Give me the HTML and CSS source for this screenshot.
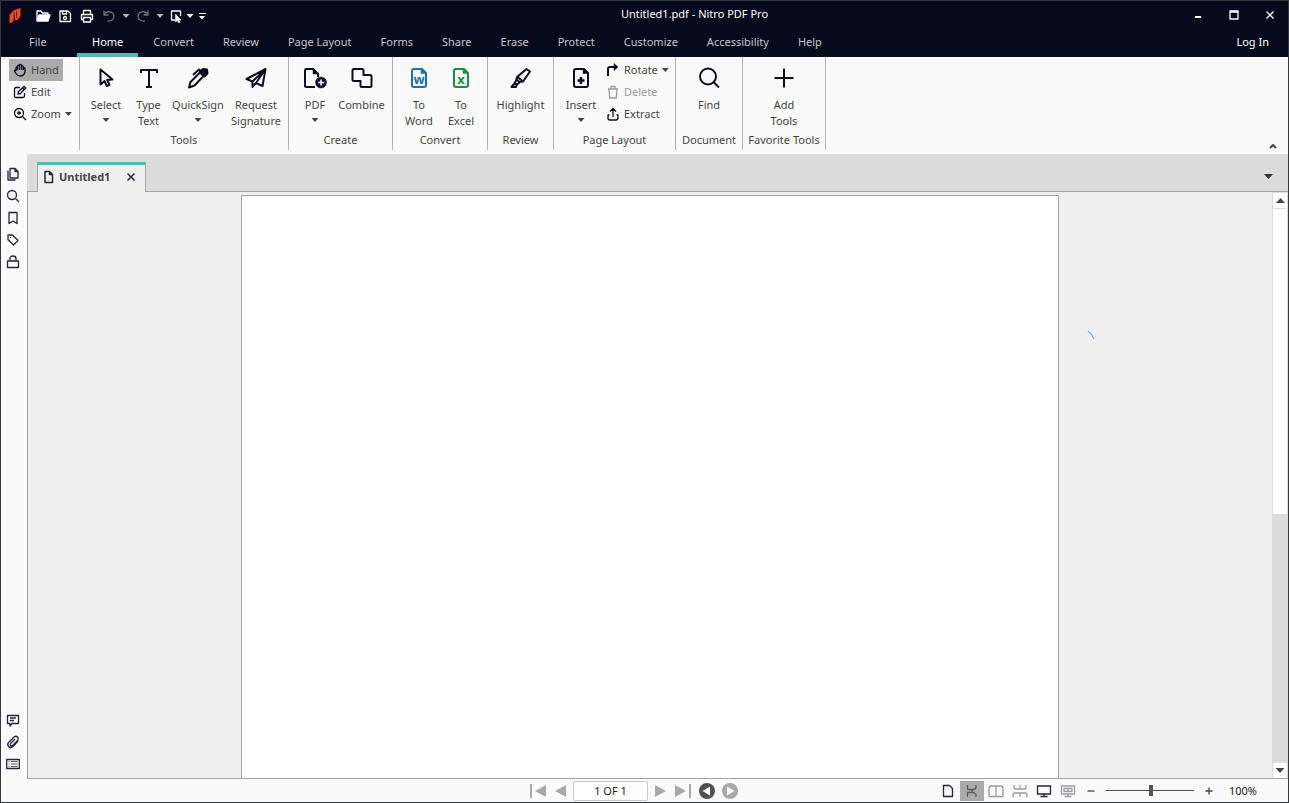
FILE: index.html
```html
<!DOCTYPE html>
<html lang="en">
<head>
    <meta charset="UTF-8">
    <meta name="viewport" content="width=device-width, initial-scale=1.0">
    <title>Untitled1.pdf - Nitro PDF Pro</title>
    <link rel="stylesheet" href="styles.css">
</head>
<body>
    <header class="titlebar">
        <div class="title-row">
            <div class="quick-access">
                <svg class="logo" width="14" height="18" viewBox="0 0 14 18"><path d="M1.500 8 4.500 4.500 6 4v7l-1 4-3.500 1z"/><path d="M5.500 3.500 11 1.500 12.500 1v8L10 12.500l-3 1z"/><path class="logo-cut" d="M6 5v7M8.500 4v7"/></svg>
                <button class="qa" aria-label="Open"><svg width="16" height="16" viewBox="0 0 16 16"><path d="M2 13V3h4l1.500 2H13v2"/><path class="solid" d="M4 7h11L13 13H2z"/></svg></button>
                <button class="qa" aria-label="Save"><svg width="16" height="16" viewBox="0 0 16 16"><path d="M3 3h8l2.500 2.500V13.500H3z"/><path d="M5.500 3v3h4V3"/><circle cx="8" cy="10" r="1.500"/></svg></button>
                <button class="qa" aria-label="Print"><svg width="16" height="16" viewBox="0 0 16 16"><path d="M4.500 6V2.500h7V6M4.500 11.500H2.500V6.500h11v5h-2"/><path d="M4.500 9.500h7v4.500h-7z"/></svg></button>
                <button class="qa dim" aria-label="Undo"><svg width="16" height="16" viewBox="0 0 16 16"><path d="M3 2.500V7h4.500M3 7c2-5 10-4 10 1.500 0 3-3 5-6.500 4.500"/></svg></button>
                <button class="drop dim" aria-label="Undo list"><i class="caret"></i></button>
                <button class="qa dim" aria-label="Redo"><svg width="16" height="16" viewBox="0 0 16 16"><path d="M13 2.500V7H8.500M13 7C11 2 3 3 3 8.500c0 3 3 5 7 4.500"/></svg></button>
                <button class="drop dim" aria-label="Redo list"><i class="caret"></i></button>
                <button class="qa narrow" aria-label="Select tool"><svg width="16" height="16" viewBox="0 0 16 16"><path d="M7 12H3.500V3h9v5"/><path class="solid thin" d="M7.500 6v8l2-1.500 1 2.500 1.500-.7-1-2.300H13z"/></svg></button>
                <button class="drop" aria-label="Select list"><i class="caret"></i></button>
                <button class="drop" aria-label="Customize toolbar"><i class="dash"></i><i class="caret"></i></button>
            </div>
            <div class="window-title">Untitled1.pdf - Nitro PDF Pro</div>
            <div class="window-controls">
                <button aria-label="Minimize"><svg width="12" height="12" viewBox="0 0 12 12"><path class="heavy" d="M3 8h6"/></svg></button>
                <button aria-label="Maximize"><svg width="12" height="12" viewBox="0 0 12 12"><path d="M2 2h8v8H2zM2 3h8"/></svg></button>
                <button aria-label="Close"><svg width="12" height="12" viewBox="0 0 12 12"><path d="M2.500 2.500l7 7M9.500 2.500l-7 7"/></svg></button>
            </div>
        </div>
        <nav class="menu">
            <a class="file" href="#">File</a>
            <a class="active" href="#">Home</a>
            <a href="#">Convert</a>
            <a href="#">Review</a>
            <a href="#">Page Layout</a>
            <a href="#">Forms</a>
            <a href="#">Share</a>
            <a href="#">Erase</a>
            <a href="#">Protect</a>
            <a href="#">Customize</a>
            <a href="#">Accessibility</a>
            <a href="#">Help</a>
            <a class="login" href="#">Log In</a>
        </nav>
    </header>

    <section class="ribbon">
        <div class="group view">
            <div class="small-list">
                <button class="small selected"><svg width="14" height="14" viewBox="0 0 14 14"><path d="M3 8V4.500q1-1.500 1.500 0V3q1-1.500 2 0V2q1-1.200 2 0v1.500q1-1.200 1.800 0V5q1.500-1 1.700.5V9q-1 4-4.500 4-3 0-4.500-2.500L1.500 8q0-1.500 1.500 0M4.500 4.500V7M6.500 3v4M8.500 3v4M10.300 4v3"/></svg>Hand</button>
                <button class="small"><svg width="14" height="14" viewBox="0 0 14 14"><path d="M7 2.500H3q-1.500 0-1.500 1.500v7q0 1.500 1.500 1.500h7q1.500 0 1.500-1.500V8M5 9l.5-2.500L11 1.500 12.800 3 7.500 8.500zM9.500 3l1.800 1.800"/></svg>Edit</button>
                <button class="small"><svg width="14" height="14" viewBox="0 0 14 14"><circle cx="6" cy="6" r="4.500"/><path d="M9.500 9.500 13 13M6 4v4M4 6h4"/></svg>Zoom<i class="caret"></i></button>
            </div>
        </div>
        <div class="group tools">
            <div class="buttons">
                <button class="big"><svg width="24" height="24" viewBox="0 0 24 24"><path d="M6.500 3.500v15l4-3.500 2.300 5 2.700-1.200-2.300-4.800 5.300-.5z"/></svg><span>Select</span><i class="caret"></i></button>
                <button class="big"><svg width="24" height="24" viewBox="0 0 24 24"><path d="M4 7V4h16v3M12 4v17M9 21h6"/></svg><span>Type Text</span></button>
                <button class="big"><svg width="24" height="24" viewBox="0 0 24 24"><path d="M3 21.500 4.500 16 14 6.500l3.500 3.500-9 9.500zM7 9l6-5.500 2 2"/><path class="solid" d="m14 5.500 3-2.500 4 .5.500 4-3 3z"/></svg><span>QuickSign</span><i class="caret"></i></button>
                <button class="big"><svg width="24" height="24" viewBox="0 0 24 24"><path d="M21.500 3 2.500 13l6 2.500L21.500 3l-3 17-6.500-3-3.500 4v-5.500M21.500 3 12 17"/></svg><span>Request Signature</span></button>
            </div>
            <div class="group-name">Tools</div>
        </div>
        <div class="group create">
            <div class="buttons">
                <button class="big"><svg width="24" height="24" viewBox="0 0 24 24"><path d="M12 21H3.500Q2 21 2 19.500v-15Q2 3 3.500 3H10l5 5v3"/><path class="solid thin" d="M10 2.500v5.500h5.500z"/><circle class="solid thin" cx="18" cy="16.500" r="5.500"/><path class="light" d="M15 16.500h6M18 13.500v6"/></svg><span>PDF</span><i class="caret"></i></button>
                <button class="big"><svg width="24" height="24" viewBox="0 0 24 24"><path d="M4 3h8q1.500 0 1.500 1.500V9H20q1.500 0 1.500 1.500v9Q21.500 21 20 21h-8q-1.500 0-1.500-1.500V15H4q-1.500 0-1.500-1.500v-9Q2.500 3 4 3z"/></svg><span>Combine</span></button>
            </div>
            <div class="group-name">Create</div>
        </div>
        <div class="group convert">
            <div class="buttons">
                <button class="big"><svg class="word" width="24" height="24" viewBox="0 0 24 24"><path d="M15 3H7Q5 3 5 5v14q0 2 2 2h10q2 0 2-2V7z"/><path class="solid thin" d="M14 3v4.500h5z"/><text x="12" y="18" text-anchor="middle">w</text></svg><span>To Word</span></button>
                <button class="big"><svg class="excel" width="24" height="24" viewBox="0 0 24 24"><path d="M15 3H7Q5 3 5 5v14q0 2 2 2h10q2 0 2-2V7z"/><path class="solid thin" d="M14 3v4.500h5z"/><text x="12" y="18" text-anchor="middle">x</text></svg><span>To Excel</span></button>
            </div>
            <div class="group-name">Convert</div>
        </div>
        <div class="group review">
            <div class="buttons">
                <button class="big"><svg width="24" height="24" viewBox="0 0 24 24"><path d="m8 11 9.500-8 3.500 2.500-7 10-3.500.5-3-2.500zM7.500 13.500l-2 4 2.500 1 3-2.500M5.500 17.500 2.500 21H7l1-2.500M8.500 11l5.500 4.500"/></svg><span>Highlight</span></button>
            </div>
            <div class="group-name">Review</div>
        </div>
        <div class="group layout">
            <div class="buttons">
                <button class="big"><svg width="24" height="24" viewBox="0 0 24 24"><path d="M15 3H7Q5 3 5 5v14q0 2 2 2h10q2 0 2-2V7z"/><path class="solid thin" d="M14 3v4.500h5z"/><path class="plus" d="M12 11v7M8.500 14.500h7"/></svg><span>Insert</span><i class="caret"></i></button>
                <div class="small-list">
                    <button class="small"><svg width="14" height="14" viewBox="0 0 14 14"><path class="heavy" d="M2 13V6q0-2 2-2h5"/><path class="solid thin" d="M8 .5 12 4 8 7.500z"/></svg>Rotate<i class="caret"></i></button>
                    <button class="small" disabled><svg width="14" height="14" viewBox="0 0 14 14"><path d="M2 4h10M3 4l.7 9h6.600L11 4M5 4V1.500h4V4"/></svg>Delete</button>
                    <button class="small"><svg width="14" height="14" viewBox="0 0 14 14"><path d="M7 10V2M4 4.500 7 1.500l3 3M3.500 8H2v3q0 2 2 2h6q2 0 2-2V8h-1.500"/></svg>Extract</button>
                </div>
            </div>
            <div class="group-name">Page Layout</div>
        </div>
        <div class="group document">
            <div class="buttons">
                <button class="big"><svg width="24" height="24" viewBox="0 0 24 24"><circle cx="11" cy="10.500" r="8"/><path d="m17 16.500 5 5"/></svg><span>Find</span></button>
            </div>
            <div class="group-name">Document</div>
        </div>
        <div class="group favorite">
            <div class="buttons">
                <button class="big"><svg width="24" height="24" viewBox="0 0 24 24"><path d="M12 2.500v19M2.500 12h19"/></svg><span>Add Tools</span></button>
            </div>
            <div class="group-name">Favorite Tools</div>
        </div>
        <button class="collapse" aria-label="Collapse ribbon"><svg width="10" height="8" viewBox="0 0 10 8"><path d="M2 6l3-3 3 3"/></svg></button>
    </section>

    <main class="workspace">
        <aside class="sidebar">
            <button aria-label="Pages"><svg width="14" height="14" viewBox="0 0 14 14"><path d="M4 1.500h5L12 4.500V11H4zM9 1.500v3h3M2 3.500V13h7.500"/></svg></button>
            <button aria-label="Search"><svg width="14" height="14" viewBox="0 0 14 14"><circle cx="6" cy="6" r="4.500"/><path d="M9.500 9.500 13 13"/></svg></button>
            <button aria-label="Bookmarks"><svg width="14" height="14" viewBox="0 0 14 14"><path d="M3 1.500h8v11L7 10l-4 2.500z"/></svg></button>
            <button aria-label="Tags"><svg width="14" height="14" viewBox="0 0 14 14"><path d="M2 2h4.500L12 7.500 7.500 12 2 6.500z"/><path d="M4.500 4v1"/></svg></button>
            <button aria-label="Security"><svg width="14" height="14" viewBox="0 0 14 14"><path d="M1.500 6h11v6.500h-11zM4 6V3.500q0-2.500 3-2.500t3 2.500V6"/></svg></button>
            <span class="spacer"></span>
            <button aria-label="Comments"><svg width="14" height="14" viewBox="0 0 14 14"><path d="M1.500 2.500h11v8H6L4 13v-2.500H1.500zM4 5h6M4 7.500h4"/></svg></button>
            <button aria-label="Attachments"><svg width="14" height="14" viewBox="0 0 14 14"><path d="m12 6-5 5.500q-2.500 2-4.500 0-1.500-2 0-4L8 2q2-1.500 3.500 0t0 3.500l-5 5q-1.200.8-2 0t0-2L9 4"/></svg></button>
            <button aria-label="Output"><svg width="14" height="14" viewBox="0 0 14 14"><path d="M.7 2.500h12.600v9H.7z"/><path class="fine" d="M5 4.500h6.500M5 7h6.500M5 9.500h6.500M2.500 4.500h1M2.500 7h1M2.500 9.500h1"/></svg></button>
        </aside>
        <div class="editor">
            <div class="tabs">
                <div class="tab">
                    <svg width="12" height="14" viewBox="0 0 12 14"><path d="M2 1.500h4.500L9.500 4.500v8H2zM6.500 1.500v3h3"/></svg>
                    <span>Untitled1</span>
                    <button aria-label="Close tab"><svg width="10" height="10" viewBox="0 0 10 10"><path d="m1.500 1.500 7 7M8.500 1.500l-7 7"/></svg></button>
                </div>
                <button class="tab-list" aria-label="Tab list"><i class="caret wide"></i></button>
            </div>
            <div class="viewer">
                <div class="canvas">
                    <div class="page"></div>
                    <svg class="spinner" width="8" height="10" viewBox="0 0 8 10"><path d="M1 1q4 3 6 8"/></svg>
                </div>
                <div class="scrollbar">
                    <button aria-label="Scroll up"><i class="caret wide up"></i></button>
                    <div class="track"><div class="thumb"></div></div>
                    <button aria-label="Scroll down"><i class="caret wide"></i></button>
                </div>
            </div>
        </div>
    </main>

    <footer class="status">
        <div class="pager">
            <button aria-label="First page"><svg width="18" height="14" viewBox="0 0 18 14"><path class="bar" d="M1 0h2v14H1z"/><path d="M17 1v12L6 7z"/></svg></button>
            <button aria-label="Previous page"><svg width="12" height="14" viewBox="0 0 12 14"><path d="M12 1v12L1 7z"/></svg></button>
            <input type="text" value="1 OF 1" aria-label="Page number">
            <button aria-label="Next page"><svg width="12" height="14" viewBox="0 0 12 14"><path d="M0 1v12l11-6z"/></svg></button>
            <button aria-label="Last page"><svg width="18" height="14" viewBox="0 0 18 14"><path class="bar" d="M15 0h2v14h-2z"/><path d="M1 1v12l11-6z"/></svg></button>
            <button class="back" aria-label="Previous view"><svg width="16" height="16" viewBox="0 0 16 16"><circle cx="8" cy="8" r="8"/><path class="arrow" d="M11 3.500v9L3.500 8z"/></svg></button>
            <button aria-label="Next view"><svg width="16" height="16" viewBox="0 0 16 16"><circle cx="8" cy="8" r="8"/><path class="arrow" d="M5 3.500v9L12.500 8z"/></svg></button>
        </div>
        <div class="view-controls">
            <button class="mode" aria-label="Single page"><svg width="16" height="14" viewBox="0 0 16 14"><path d="M3.500 1.500h6l3 3v8h-9z"/></svg></button>
            <button class="mode current" aria-label="Continuous"><svg width="16" height="14" viewBox="0 0 16 14"><path d="M3.500 1v4.500h6q2.500 0 2.500-2.500V1M3.500 13V8.500h6l2.500 2V13M8 5.500v3"/></svg></button>
            <button class="mode grey" aria-label="Facing"><svg width="16" height="14" viewBox="0 0 16 14"><path d="M3.500 2h9q2.500 0 2.500 2.500v8H1v-8Q1 2 3.500 2zM8 2v10.500"/></svg></button>
            <button class="mode grey" aria-label="Continuous facing"><svg width="16" height="14" viewBox="0 0 16 14"><path d="M2 1v2q0 2 2 2h8q2 0 2-2V1M1 13v-2q0-2 2-2h10q2 0 2 2v2M8 1v4M8 9v4"/></svg></button>
            <button class="mode" aria-label="Full screen"><svg width="16" height="14" viewBox="0 0 16 14"><path d="M1.500 2h13v8h-13zM4.500 12.500h7M8 10v2.500"/></svg></button>
            <button class="mode grey" aria-label="Presentation"><svg width="16" height="14" viewBox="0 0 16 14"><path d="M1.500 2h13v8h-13zM4.500 12.500h7M8 10v2.500M4 4.500h8v3H4zM8 4.500v3"/></svg></button>
            <button class="step" aria-label="Zoom out"><svg width="10" height="10" viewBox="0 0 10 10"><path d="M1.500 5h7"/></svg></button>
            <input type="range" min="0" max="100" value="51" aria-label="Zoom">
            <button class="step" aria-label="Zoom in"><svg width="10" height="10" viewBox="0 0 10 10"><path d="M1.500 5h7M5 1.500v7"/></svg></button>
            <span class="percent">100%</span>
        </div>
    </footer>
</body>
</html>
```
FILE: styles.css
```css
* {
    box-sizing: border-box;
}
body {
    margin: 0;
    height: 100vh;
    display: flex;
    flex-direction: column;
    overflow: hidden;
    border: 1px solid #35363b;
    background: #fafafa;
    color: #444;
    font-family: "Noto Sans", "Open Sans", sans-serif;
    font-size: 11px;
    line-height: 16px;
}
button {
    display: flex;
    align-items: center;
    justify-content: center;
    margin: 0;
    padding: 0;
    border: 0;
    background: none;
    color: inherit;
    font: inherit;
}
a {
    color: inherit;
    text-decoration: none;
}
svg {
    display: block;
    flex: none;
    fill: none;
    stroke: currentColor;
    stroke-width: 1.3;
    stroke-linejoin: round;
}
.solid {
    fill: currentColor;
}
.thin {
    stroke-width: 0.5;
}
.fine {
    stroke-width: 0.8;
}
.heavy {
    stroke-width: 2;
}
.caret {
    flex: none;
    width: 7px;
    height: 4px;
    background: currentColor;
    clip-path: polygon(0 0, 100% 0, 50% 100%);
}
.caret.wide {
    width: 9px;
    height: 5px;
}
.caret.up {
    transform: rotate(180deg);
}

/* title bar and menu */
.titlebar {
    flex: none;
    background: #07091c;
    color: #c4c5ca;
}
.title-row {
    display: flex;
    height: 28px;
}
.quick-access {
    display: flex;
    align-items: center;
    width: 208px;
    padding: 2px 0 0 7px;
    color: #fff;
}
.logo {
    margin-right: 10px;
    fill: #f04a1d;
    stroke: none;
}
.logo-cut {
    stroke: #07091c;
    stroke-width: 0.6;
}
.qa {
    width: 22px;
    height: 20px;
}
.qa.narrow {
    width: 16px;
    margin-left: 2px;
}
.drop {
    flex-direction: column;
    gap: 2px;
    width: 12px;
    height: 20px;
}
.dim {
    color: #6d6f7a;
}
.drop.dim {
    color: #b5b6bd;
}
.dash {
    width: 7px;
    height: 1px;
    background: #fff;
}
.window-title {
    flex: 1;
    color: #fff;
    line-height: 26px;
    text-align: center;
}
.window-controls {
    display: flex;
    color: #fff;
}
.window-controls button {
    width: 36px;
}
.menu {
    display: flex;
    gap: 1px;
    height: 28px;
}
.menu a {
    padding: 0 14px;
    line-height: 26px;
}
.menu .file {
    width: 75px;
    padding-left: 28px;
}
.menu .active {
    padding: 0 15px;
    border-bottom: 4px solid #4dbdb6;
    border-radius: 2px 2px 0 0;
    color: #fff;
}
.menu .login {
    margin-left: auto;
    padding-right: 19px;
    color: #fff;
}

/* ribbon */
.ribbon {
    flex: none;
    display: flex;
    height: 97px;
}
.group {
    display: flex;
    flex-direction: column;
    height: 93px;
    padding-top: 2px;
    border-right: 1px solid #b0b0b0;
}
.view {
    width: 79px;
    padding-left: 8px;
}
.tools {
    width: 209px;
}
.create {
    width: 104px;
}
.convert {
    width: 95px;
}
.review {
    width: 66px;
}
.layout {
    width: 122px;
}
.document {
    width: 67px;
}
.favorite {
    width: 83px;
}
.buttons {
    display: grid;
    justify-content: center;
    grid-template-columns: 42px;
    height: 72px;
}
.tools .buttons {
    padding-left: 3px;
    grid-template-columns: 42px 43px 56px 60px;
}
.create .buttons {
    grid-template-columns: 42px 51px;
}
.convert .buttons {
    grid-template-columns: 42px 42px;
}
.review .buttons {
    grid-template-columns: 60px;
}
.layout .buttons {
    padding-left: 3px;
    grid-template-columns: 42px 70px;
}
.big {
    flex-direction: column;
    justify-content: flex-start;
    padding: 7px 1px 0;
}
.big svg {
    margin-bottom: 7px;
    color: #0b0d20;
    stroke-width: 2;
}
.big .caret {
    margin-top: 5px;
}
.big .thin {
    stroke-width: 0.5;
}
.big .light {
    stroke: #fff;
    stroke-width: 1.5;
}
.plus {
    stroke-width: 2.5;
}
.big .word {
    color: #1673b5;
}
.big .excel {
    color: #168f4c;
}
.big text {
    fill: currentColor;
    stroke: none;
    font-family: "Open Sans", sans-serif;
    font-size: 13px;
    font-weight: bold;
}
.small-list {
    display: flex;
    flex-direction: column;
    align-items: flex-start;
}
.small {
    height: 22px;
    padding: 0 4px;
    gap: 4px;
}
.small svg {
    color: #0b0d20;
}
.small:disabled,
.small:disabled svg {
    color: #9b9b9b;
}
.selected {
    background: #ababab;
}
.group-name {
    line-height: 18px;
    text-align: center;
    white-space: nowrap;
}
.collapse {
    align-self: flex-end;
    margin: 0 10px 4px auto;
}
.collapse svg {
    stroke-width: 2;
}

/* workspace */
.workspace {
    flex: 1;
    display: flex;
    min-height: 0;
}
.sidebar {
    display: flex;
    flex-direction: column;
    width: 26px;
    padding: 9px 2px 4px 0;
    color: #24263a;
}
.sidebar button {
    height: 22px;
}
.spacer {
    flex: 1;
}
.editor {
    flex: 1;
    display: flex;
    flex-direction: column;
    min-width: 0;
    border-bottom: 1px solid #a3a3a3;
}
.tabs {
    display: flex;
    height: 38px;
    padding: 8px 15px 0 10px;
    background: #dcdcdc;
    box-shadow: inset 0 -1px #a3a3a3;
}
.tab {
    display: flex;
    align-items: center;
    width: 109px;
    padding: 0 9px 3px 5px;
    border: solid #a3a3a3;
    border-width: 0 1px;
    border-top: 3px solid #4dbdb6;
    background: #efefef;
    font-weight: bold;
}
.tab span {
    flex: 1;
    padding-left: 4px;
}
.tab svg {
    color: #24263a;
    stroke-width: 1.5;
}
.tab-list {
    width: 9px;
    margin-left: auto;
    padding-bottom: 1px;
    color: #333;
}
.viewer {
    flex: 1;
    display: flex;
    min-height: 0;
    border-left: 1px solid #a3a3a3;
    background: #efefef;
}
.canvas {
    position: relative;
    flex: 1;
    display: flex;
    justify-content: center;
    padding-top: 3px;
    overflow: hidden;
}
.page {
    width: 818px;
    border: 1px solid #a3a3a3;
    border-bottom: 0;
    background: #fff;
}
.spinner {
    position: absolute;
    top: 138px;
    right: 177px;
    stroke: #79b4dd;
}
.scrollbar {
    display: flex;
    flex-direction: column;
    width: 16px;
    border: solid #dcdcdc;
    border-width: 1px 1px 0;
}
.scrollbar button {
    height: 15px;
    background: #fff;
    color: #444;
}
.track {
    flex: 1;
    border-top: 1px solid #dcdcdc;
    background: #dcdcdc;
}
.thumb {
    height: 55%;
    background: #fff;
}

/* status bar */
.status {
    flex: none;
    display: grid;
    grid-template-columns: 1fr auto 1fr;
    align-items: center;
    height: 23px;
}
.pager {
    grid-column: 2;
    display: flex;
    align-items: center;
    gap: 7px;
    margin-right: 22px;
    color: #a8a8a8;
}
.pager svg {
    fill: currentColor;
    stroke: none;
}
.pager input {
    width: 75px;
    height: 20px;
    padding: 0;
    border: 1px solid #c8c8c8;
    border-radius: 2px;
    background: #fff;
    color: #222;
    font: inherit;
    text-align: center;
}
.pager .arrow {
    fill: #fafafa;
}
.pager .back {
    color: #505050;
}
.view-controls {
    display: flex;
    align-items: center;
    justify-content: flex-end;
    padding-right: 31px;
}
.mode {
    width: 24px;
    height: 20px;
    color: #24263a;
}
.mode.current {
    background: #ababab;
    color: #5a5a5a;
}
.mode.grey {
    color: #9a9aa2;
}
.step {
    width: 22px;
    height: 20px;
}
.view-controls input {
    appearance: none;
    width: 88px;
    height: 12px;
    margin: 0 4px;
    background: linear-gradient(#555, #555) center / 100% 1px no-repeat;
}
.view-controls input::-webkit-slider-thumb {
    appearance: none;
    width: 4px;
    height: 11px;
    background: #555;
}
.percent {
    width: 37px;
    text-align: right;
    color: #222;
}
```
